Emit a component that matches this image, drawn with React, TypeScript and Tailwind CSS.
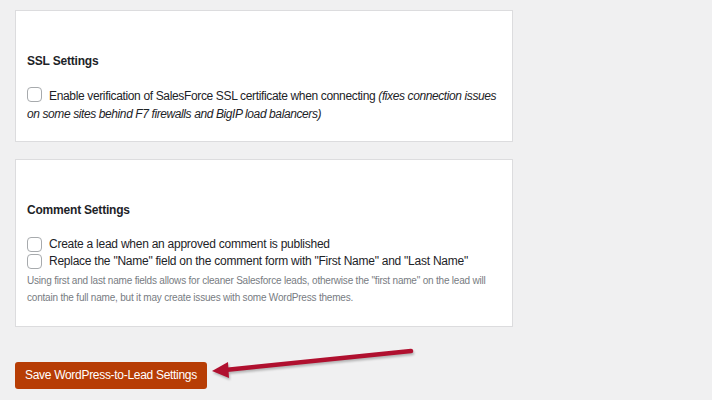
import React from "react";

const font = { fontFamily: '"Liberation Sans", Arial, sans-serif' };

function Checkbox() {
  return (
    <span className="inline-block w-[15px] h-[15px] shrink-0 rounded-[4px] border border-[#a7aaad] bg-white" />
  );
}

export default function App() {
  return (
    <div className="relative w-[712px] h-[400px] bg-[#f0f0f1] overflow-hidden text-[#1d2327]" style={font}>
      <div className="pl-[15px] pt-[10px] w-[513px]">
        {/* SSL settings */}
        <section className="bg-white border border-[#dcdcde] px-[11px] pt-[41px] pb-[18px]">
          <h3 className="text-[12px] font-bold leading-[18px] tracking-[-0.2px]">SSL Settings</h3>
          <p className="mt-[17px] text-[12px] leading-[18px] tracking-[-0.35px]">
            <span className="inline-flex align-[-2px] mr-[7px]"><Checkbox /></span>
            Enable verification of SalesForce SSL certificate when connecting{" "}
            <em className="tracking-[-0.4px]">(fixes connection issues on some sites behind F7 firewalls and BigIP load balancers)</em>
          </p>
        </section>

        {/* Comment settings */}
        <section className="mt-[17px] bg-white border border-[#dcdcde] px-[11px] pt-[41px] pb-[20px]">
          <h3 className="text-[12px] font-bold leading-[18px] tracking-[-0.2px]">Comment Settings</h3>
          <div className="mt-[17px] flex flex-col">
            <label className="flex items-center gap-[7px] text-[12px] leading-[17px] tracking-[-0.25px]">
              <Checkbox />
              Create a lead when an approved comment is published
            </label>
            <label className="flex items-center gap-[7px] text-[12px] leading-[17px] tracking-[-0.25px]">
              <Checkbox />
              Replace the "Name" field on the comment form with "First Name" and "Last Name"
            </label>
          </div>
          <p className="mt-[2px] text-[10px] leading-[17px] tracking-[-0.2px] text-[#787c82]">
            Using first and last name fields allows for cleaner Salesforce leads, otherwise the "first name" on the lead will
            contain the full name, but it may create issues with some WordPress themes.
          </p>
        </section>

        <button className="block mt-[35px] h-[27px] px-[10px] rounded-[3px] bg-[#b73d05] text-white text-[12px] leading-[27px] tracking-[-0.3px]">
          Save WordPress-to-Lead Settings
        </button>
      </div>

      {/* annotation arrow */}
      <svg className="absolute left-0 top-0 pointer-events-none drop-shadow-[1px_2px_1px_rgba(0,0,0,0.25)]" width="712" height="400">
        <line x1="411" y1="351" x2="225" y2="370" stroke="#b0102f" strokeWidth="4.5" strokeLinecap="round" />
        <polygon points="212,371 228,362 229,378" fill="#b0102f" />
      </svg>
    </div>
  );
}
